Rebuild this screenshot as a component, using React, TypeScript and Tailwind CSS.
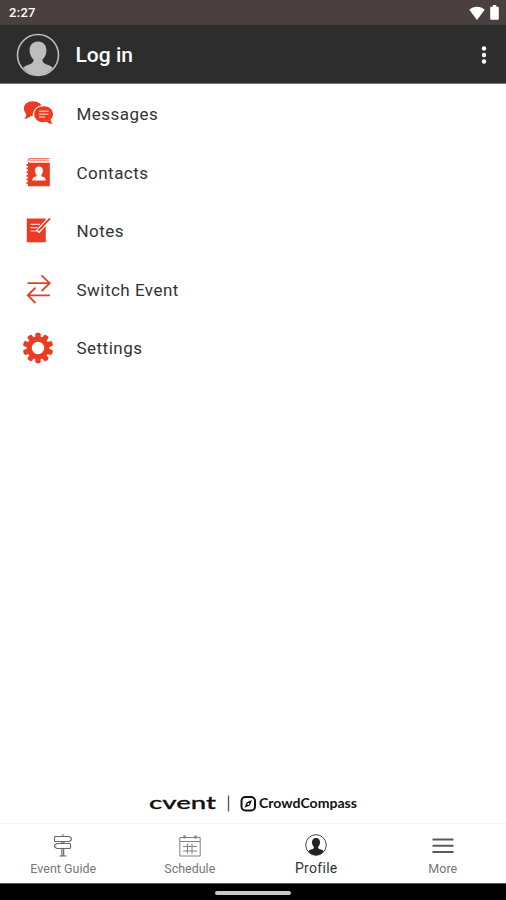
import type { ReactNode } from "react";

function MessagesIcon() {
  return (
    <svg viewBox="0 0 32 32" className="h-8 w-8" fill="#ea3b23">
      <path d="M10.500 3.200c-5 0-8.600 3-8.600 7 0 2.400 1 4.300 2.300 5.600 0 2-.6 3.600-1.900 5 2.800-.2 4.900-1.300 6.300-2.800h2c.2-6 4-10 8.900-10.800-1.600-2.500-5-4-9-4z" />
      <path d="M21.600 8.300c5.400 0 9.400 3.300 9.400 7.700 0 2.300-1 4.300-2.300 5.600.1 1.700.7 3 1.900 4.400-2.600 0-4.400-.8-5.800-2.200-1 .3-2 .4-3.200.4-5.400 0-9.400-3.500-9.400-8s4-7.900 9.400-7.900z" />
      <path d="M17 13.300h9.500M17 16.200h9.500M17 19h6" stroke="#f8a99b" strokeWidth="1.400" />
    </svg>
  );
}

function ContactsIcon() {
  return (
    <svg viewBox="0 0 32 32" className="h-8 w-8">
      <path d="M27.500 1.600H8.500c-1.500 0-2.500 1-2.500 2.500" fill="none" stroke="#f07565" strokeWidth="1.300" />
      <path d="M27 3.600H8" stroke="#f29a8d" strokeWidth="1.300" />
      <path d="M6 4.500c.4.800 1.200 1.200 2.200 1.200h19.600v23.600H6z" fill="#ea3b23" />
      <path d="M5.400 7v22" stroke="#ea3b23" strokeWidth="1.600" strokeDasharray="2 1.600" />
      <path
        d="M17 9.500c2.500 0 4 1.700 4 4.200 0 1.900-.8 3.300-1.800 4.300.2 1.400 1 1.600 2.500 2.100 1.400.5 2 1.500 2 3.400H10.300c0-1.900.6-2.900 2-3.400 1.500-.5 2.300-.7 2.500-2.100-1-1-1.800-2.400-1.800-4.300 0-2.500 1.500-4.200 4-4.200z"
        fill="#fff"
      />
    </svg>
  );
}

function NotesIcon() {
  return (
    <svg viewBox="0 0 32 32" className="h-8 w-8">
      <path d="M4.800 3.500h19v23.800h-19z" fill="#ea3b23" />
      <path d="M8.500 9.300h9.500M8.500 12.700h7M8.500 16h8" stroke="#fbd0c8" strokeWidth="1.200" />
      <path d="M29 2.500L18.500 13.500l-3 3.300" stroke="#fff" strokeWidth="4.200" />
      <path d="M28 3.300L18.800 13.200l-2.600 2.200" stroke="#ea3b23" strokeWidth="1.900" fill="none" />
    </svg>
  );
}

function SwitchIcon() {
  return (
    <svg viewBox="0 0 32 32" className="h-8 w-8" fill="none" stroke="#ea3b23" strokeWidth="1.800">
      <path d="M5.500 9.200h22M19.500 1.300l8.200 7.900-8.200 7.900" />
      <path d="M28 21.300H6M13.500 13.600l-7.700 7.700 7.700 7.700" />
    </svg>
  );
}

const teeth = [0, 36, 72, 108, 144, 180, 216, 252, 288, 324];

function SettingsIcon() {
  return (
    <svg viewBox="0 0 32 32" className="h-8 w-8" fill="#ea3b23">
      <circle cx="16" cy="16" r="8.800" fill="none" stroke="#ea3b23" strokeWidth="5.200" />
      {teeth.map((deg) => (
        <rect key={deg} x="13.300" y=".8" width="5.400" height="6" rx="1.600" transform={`rotate(${deg} 16 16)`} />
      ))}
    </svg>
  );
}

function SignpostIcon() {
  return (
    <svg viewBox="0 0 22 24" className="h-6 w-[22px]" fill="none" stroke="#666" strokeWidth="1.200" strokeLinejoin="round">
      <path d="M3.500 2.500q-1 0-1 1v3q0 1 1 1h13.500q2.500-1 2.500-2.500T17 2.500z" />
      <path d="M17.500 9.500H5Q2.500 10.500 2.500 12T5 14.500h12.500q1 0 1-1v-3q0-1-1-1z" />
      <path d="M9.800 1h2M9.800 7.500v2M11.800 7.500v2M9.900 14.500v7M11.700 14.500v7M7.500 22h7" />
    </svg>
  );
}

function CalendarIcon() {
  return (
    <svg viewBox="0 0 22 24" className="h-6 w-[22px]" fill="none" stroke="#808080" strokeWidth="1">
      <path d="M.8 3.500h20.400v18.500H.8zM.8 7.500h20.400" />
      <path d="M5.500 1.500v3M16.500 1.500v3" strokeWidth="2.400" />
      <path d="M4 12.500h14M4 17h14M8.500 9.500v10M13 9.500v10" />
    </svg>
  );
}

function ProfileIcon() {
  return (
    <svg viewBox="0 0 22 22" className="mb-[3px] h-[22px] w-[22px]">
      <circle cx="11" cy="11" r="10.300" fill="#fff" stroke="#444" strokeWidth="1" />
      <path
        d="M11 4c2.600 0 4 1.700 4 4.300 0 2-.8 3.600-1.900 4.600 0 1.700 1 2 2.900 2.600 1.300.4 2.100 1 2.600 2A10.200 10.200 0 0 1 11 21.200a10.200 10.200 0 0 1-7.600-3.700c.5-1 1.300-1.600 2.600-2 1.900-.6 2.900-.9 2.900-2.600C7.800 11.900 7 10.300 7 8.300 7 5.700 8.400 4 11 4z"
        fill="#222"
      />
    </svg>
  );
}

function MoreIcon() {
  return (
    <svg viewBox="0 0 22 24" className="h-6 w-[22px]" stroke="#5a5a5a" strokeWidth="2">
      <path d="M.5 5.500h21M.5 11.800h21M.5 18h21" />
    </svg>
  );
}

const menu: { label: string; icon: ReactNode }[] = [
  { label: "Messages", icon: <MessagesIcon /> },
  { label: "Contacts", icon: <ContactsIcon /> },
  { label: "Notes", icon: <NotesIcon /> },
  { label: "Switch Event", icon: <SwitchIcon /> },
  { label: "Settings", icon: <SettingsIcon /> },
];

const tabs = [
  { label: "Event Guide", icon: <SignpostIcon /> },
  { label: "Schedule", icon: <CalendarIcon /> },
  { label: "Profile", icon: <ProfileIcon />, active: true },
  { label: "More", icon: <MoreIcon /> },
];

export default function App() {
  return (
    <div className="flex h-[900px] w-[506px] flex-col bg-white font-[Roboto,sans-serif]">
      {/* Status bar */}
      <div className="flex h-[25px] items-center justify-between bg-[#4a4040] pr-[7px] pl-[9px]">
        <span className="pt-px text-[13px] font-medium tracking-[0.3px] text-white">2:27</span>
        <div className="flex items-center gap-[5px]">
          <svg viewBox="0 0 16 14" className="h-[14px] w-4" fill="#fff">
            <path d="M8 14L.3 3.800C2.500 1.800 5 .8 8 .8s5.500 1 7.700 3z" />
          </svg>
          <svg viewBox="0 0 9 15" className="h-[15px] w-[9px]" fill="#fff">
            <path d="M2.800 0h3.400v1.700h1.600q1 0 1 1v11q0 1-1 1H1.200q-1 0-1-1v-11q0-1 1-1h1.600z" />
          </svg>
        </div>
      </div>

      {/* Header */}
      <header className="flex h-[59px] items-center border-b border-[#777] bg-[#2d2d2d] pt-px pr-[18px] pl-4">
        <svg viewBox="0 0 44 44" className="h-11 w-11">
          <circle cx="22" cy="22" r="20.500" fill="none" stroke="#bdbdbd" strokeWidth="1.600" />
          <path
            d="M22 8.500c5.300 0 8.400 3.600 8.400 8.800 0 4.200-1.600 7-3.900 9.200 0 3.300 1.700 4.200 5.600 5.500 2.200.7 3.700 1.500 4.700 2.800A20 20 0 0 1 22 42.500a20 20 0 0 1-14.800-7.700c1-1.300 2.500-2.100 4.700-2.800 3.900-1.300 5.600-2.200 5.600-5.500-2.300-2.200-3.900-5-3.900-9.200 0-5.200 3.100-8.800 8.400-8.800z"
            fill="#bdbdbd"
          />
        </svg>
        <h1 className="ml-[15.500px] flex-1 pt-[3px] text-[21px] font-medium text-white">Log in</h1>
        <svg viewBox="0 0 8 20" className="h-5 w-2" fill="#fff">
          <circle cx="4" cy="3.500" r="2.200" />
          <circle cx="4" cy="10" r="2.200" />
          <circle cx="4" cy="16.500" r="2.200" />
        </svg>
      </header>

      {/* Menu */}
      <ul className="flex-1 pt-[1px]">
        {menu.map((item) => (
          <li key={item.label} className="flex h-[58.5px] items-center pl-[22px]">
            {item.icon}
            <span className="ml-[22.500px] pt-px text-[17px] tracking-[0.48px] text-[#333]">{item.label}</span>
          </li>
        ))}
      </ul>

      {/* Brand */}
      <div className="flex h-10 items-center justify-center">
        <svg viewBox="0 0 210 24" className="h-6 w-[210px]" fill="#111">
          <text
            x="1"
            y="18"
            fontSize="18"
            fontWeight="500"
            textLength="67"
            lengthAdjust="spacingAndGlyphs"
            className="font-[Lato,sans-serif]"
            stroke="#111"
            strokeWidth=".3"
          >
            cvent
          </text>
          <path d="M80.500 4.500v16" stroke="#555" strokeWidth="1.300" />
          <rect x="93.500" y="6" width="13.500" height="13.500" rx="4" fill="none" stroke="#111" strokeWidth="2" />
          <path d="M104 9l-2.200 5.500-5.300 2.300 2.200-5.500z" />
          <circle cx="100.300" cy="12.900" r="1" fill="#fff" />
          <text
            x="111"
            y="17"
            fontSize="12.500"
            fontWeight="700"
            textLength="98"
            lengthAdjust="spacingAndGlyphs"
            className="font-[Lato,sans-serif]"
          >
            CrowdCompass
          </text>
        </svg>
      </div>

      {/* Tab bar */}
      <nav className="grid h-[60px] grid-cols-4 border-t border-[#f2f2f2] bg-white">
        {tabs.map((tab) => (
          <div key={tab.label} className="flex flex-col items-center pt-2">
            <div className="flex h-7 items-center justify-center">{tab.icon}</div>
            <span
              className={
                tab.active
                  ? "-mt-px text-[14px] leading-[18px] tracking-[0.3px] text-[#333]"
                  : "text-[12.5px] leading-[18px] text-[#777]"
              }
            >
              {tab.label}
            </span>
          </div>
        ))}
      </nav>

      {/* Gesture bar */}
      <div className="flex h-[17px] justify-center border-t border-[#555] bg-black pt-[7px]">
        <div className="h-[4px] w-[76px] rounded-full bg-[#c8c8c8]" />
      </div>
    </div>
  );
}
